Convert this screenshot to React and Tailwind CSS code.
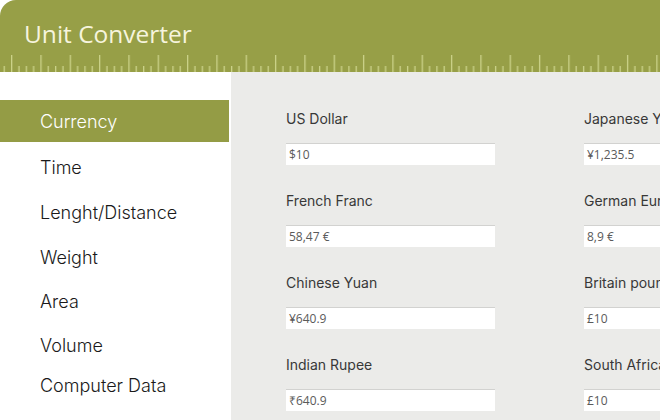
import React from 'react';

const categories = ['Currency', 'Time', 'Lenght/Distance', 'Weight', 'Area', 'Volume', 'Computer Data'];
const itemHeights = ['h-[42px] mb-[3px]', 'h-[45px]', 'h-[45px]', 'h-[44px]', 'h-[44px]', 'h-[44px]', 'h-[36px]'];

const rates = [
  [
    { label: 'US Dollar', value: '$10' },
    { label: 'Japanese Yen', value: '¥1,235.5' },
  ],
  [
    { label: 'French Franc', value: '58,47 €' },
    { label: 'German Euro', value: '8,9 €' },
  ],
  [
    { label: 'Chinese Yuan', value: '¥640.9' },
    { label: 'Britain pound', value: '£10' },
  ],
  [
    { label: 'Indian Rupee', value: '₹640.9' },
    { label: 'South African Rand', value: '£10' },
  ],
];

function Ruler() {
  return (
    <svg className="block w-full h-[18px]" height="18">
      <defs>
        <pattern id="ticks" x="11" y="0" width="29.33" height="18" patternUnits="userSpaceOnUse">
          <rect x="0" y="1" width="1.3" height="17" fill="#cbd289" />
          <rect x="7.33" y="12" width="1.3" height="6" fill="#cbd289" />
          <rect x="14.67" y="12" width="1.3" height="6" fill="#cbd289" />
          <rect x="22" y="12" width="1.3" height="6" fill="#cbd289" />
        </pattern>
      </defs>
      <rect width="100%" height="18" fill="url(#ticks)" />
    </svg>
  );
}

function Field({ label, value }) {
  return (
    <div className="flex flex-col">
      <div className="h-[20px] leading-[20px] text-[14px] text-[#383838] font-['Inter',sans-serif] whitespace-nowrap">{label}</div>
      <div className="mt-[14px] h-[22px] w-[209px] bg-white border-t border-[#d2d2d0] flex items-center pl-[3px] text-[12px] text-[#5a5a5a] font-['Open_Sans',sans-serif] whitespace-nowrap">
        {value}
      </div>
    </div>
  );
}

export default function App() {
  return (
    <div className="w-[660px] h-[420px] overflow-hidden bg-white flex flex-col">
      {/* Header */}
      <div className="h-[72px] bg-[#979f47] rounded-tl-[16px] flex flex-col justify-end shrink-0">
        <h1 className="pl-[24px] text-[24.5px] leading-[30px] text-[#f6f4dd] font-['Open_Sans',sans-serif] mb-[5px]">
          Unit Converter
        </h1>
        <Ruler />
      </div>

      <div className="flex flex-1 min-h-0">
        {/* Sidebar */}
        <div className="w-[231px] shrink-0 bg-white pt-[28px] pr-[2px] font-['Inter',sans-serif] text-[18px] font-light">
          {categories.map((c, i) => (
            <div
              key={c}
              className={`${itemHeights[i]} flex items-center pl-[40px] ${
                i === 0 ? 'bg-[#949c45] text-white' : 'text-[#1a1a1a]'
              }`}
            >
              {c}
            </div>
          ))}
        </div>

        {/* Main */}
        <div className="flex-1 bg-[#ebebe9] pt-[37px] pl-[55px] flex flex-col gap-[26px]">
          {rates.map((row, i) => (
            <div key={i} className="flex gap-[89px]">
              {row.map((r) => (
                <Field key={r.label} label={r.label} value={r.value} />
              ))}
            </div>
          ))}
        </div>
      </div>
    </div>
  );
}
